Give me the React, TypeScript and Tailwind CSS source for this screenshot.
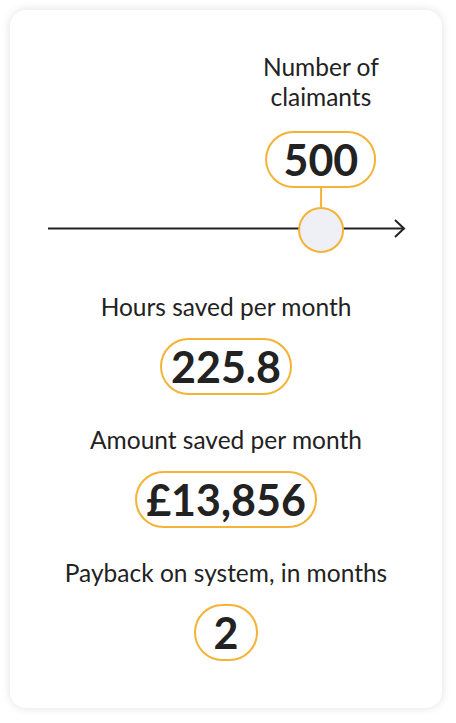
import React from 'react';

const stats = [
  { label: 'Hours saved per month', value: '225.8' },
  { label: 'Amount saved per month', value: '£13,856' },
  { label: 'Payback on system, in months', value: '2' },
];

function Bubble({ children }: { children: React.ReactNode }) {
  return (
    <div className="flex h-[57px] min-w-[64px] items-center justify-center rounded-full border-2 border-[#f4b336] bg-white px-[9px] text-[43px] font-bold leading-none text-[#222]">
      {children}
    </div>
  );
}

export default function App() {
  const claimants = 500;
  const pct = 75.8;

  return (
    <div className="min-h-[723px] bg-white p-[10px] font-['Lato','Noto_Sans',sans-serif] text-[#222]">
      <div className="flex h-[698px] w-[432px] flex-col items-center rounded-[16px] bg-white pt-[42px] shadow-[0_0_10px_rgba(0,0,0,0.12)]">
        <div className="relative ml-[38px] h-[200px] w-[360px] self-start">
          <svg className="absolute left-0 top-[166px]" width="360" height="22" viewBox="0 0 360 22">
            <line x1="0" y1="10.5" x2="356" y2="10.5" stroke="#222" strokeWidth="2" />
            <polyline points="347,2 356,10.5 347,19" fill="none" stroke="#222" strokeWidth="2" />
          </svg>
          <div
            className="absolute top-0 flex -translate-x-1/2 flex-col items-center"
            style={{ left: `${pct}%` }}
          >
            <div className="whitespace-nowrap text-center text-[24.5px] leading-[30px]">
              Number of
              <br />
              claimants
            </div>
            <div className="mt-[19px] flex h-[57px] items-center justify-center rounded-full border-2 border-[#f4b336] bg-white px-[16px] text-[43px] font-bold leading-none">
              {claimants}
            </div>
            <div className="h-[19px] w-[2px] bg-[#f4b336]" />
            <div className="h-[46px] w-[46px] rounded-full border-2 border-[#f4b336] bg-[#eef0f5]" />
          </div>
        </div>

        <div className="mt-[40px] flex flex-col items-center">
          {stats.map((s, i) => (
            <div key={s.label} className={`flex flex-col items-center ${i > 0 ? 'mt-[30px]' : ''}`}>
              <div className="whitespace-nowrap text-[24.5px] leading-[30px]">{s.label}</div>
              <div className="mt-[16px]">
                <Bubble>{s.value}</Bubble>
              </div>
            </div>
          ))}
        </div>
      </div>
    </div>
  );
}
